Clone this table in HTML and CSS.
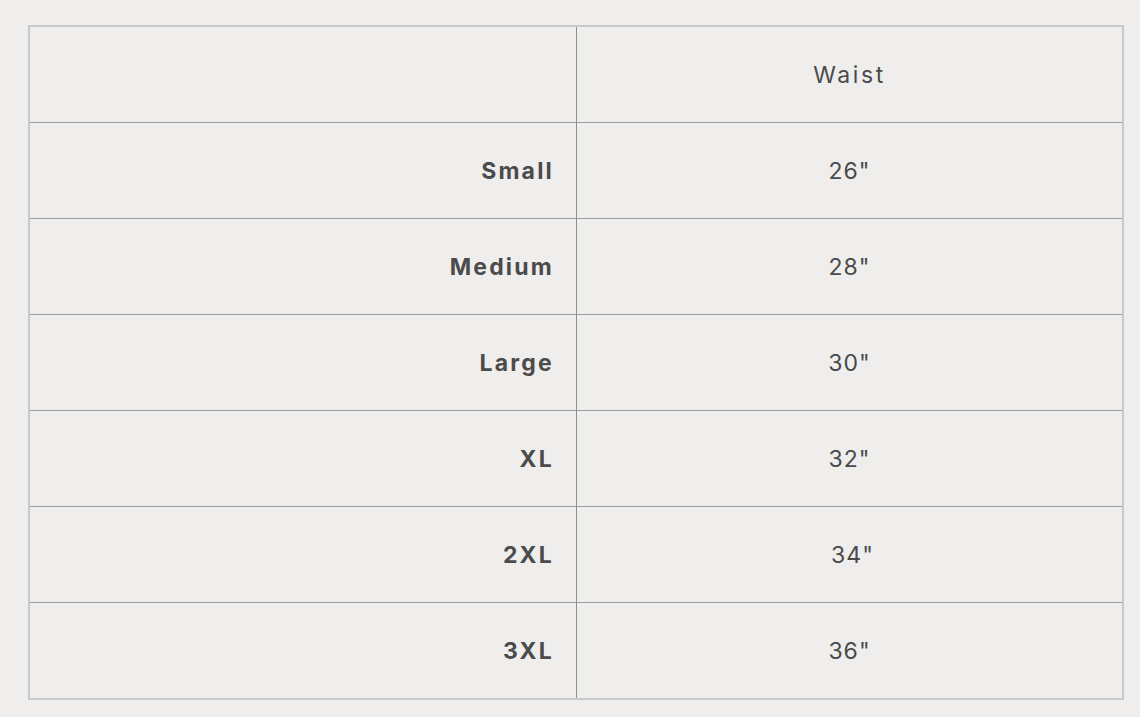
FILE: index.html
```html
<!DOCTYPE html>
<html>
<head>
<meta charset="utf-8">
<link rel="stylesheet" href="styles.css">
</head>
<body>
<table class="size-table">
  <tr class="head-row">
    <td class="label"></td>
    <td class="value head">Waist</td>
  </tr>
  <tr><td class="label">Small</td><td class="value">26"</td></tr>
  <tr><td class="label">Medium</td><td class="value">28"</td></tr>
  <tr><td class="label">Large</td><td class="value">30"</td></tr>
  <tr><td class="label">XL</td><td class="value">32"</td></tr>
  <tr><td class="label">2XL</td><td class="value shifted">34"</td></tr>
  <tr><td class="label">3XL</td><td class="value">36"</td></tr>
</table>
</body>
</html>
```

FILE: styles.css
```css
html, body {
  margin: 0;
  padding: 0;
  background: #efeeed;
}
body {
  padding: 25px 0 0 28px;
  font-family: "Inter", "Noto Sans", sans-serif;
  color: #4a4a4a;
}
.size-table {
  border-collapse: collapse;
  width: 1096px;
  border: 2px solid #c9c9c9;
}
.size-table td {
  height: 95px;
  padding: 0;
  border-top: 1px solid #9c9c9c;
  vertical-align: middle;
}
.head-row td {
  border-top: none;
}
.label {
  width: 524px;
  border-right: 1px solid #8f8f8f;
  text-align: right;
  padding-right: 22px !important;
  font-weight: 700;
  font-size: 23px;
  letter-spacing: 2.2px;
  color: #4b4b4b;
}
.value {
  text-align: center;
  font-size: 23px;
  letter-spacing: 1px;
  color: #4a4a4a;
}
.head {
  letter-spacing: 2.6px;
}
.shifted {
  padding-left: 6px !important;
}
```
